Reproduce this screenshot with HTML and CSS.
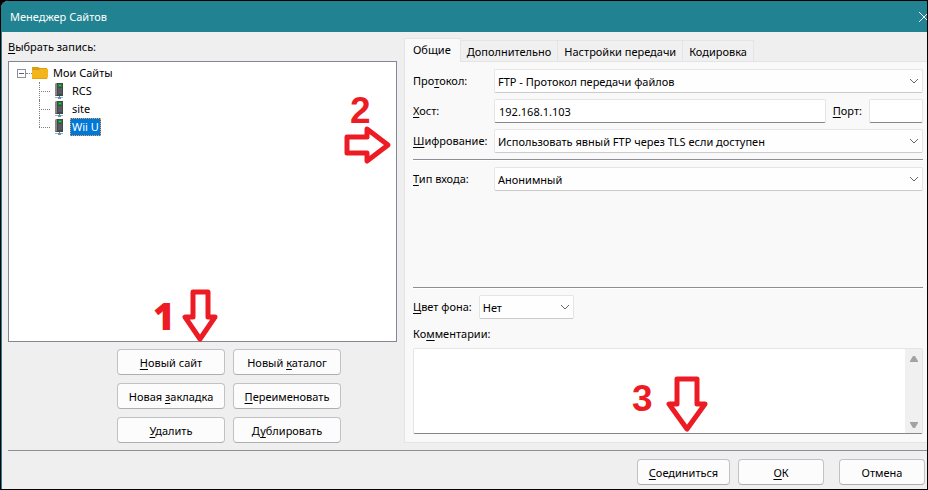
FILE: index.html
```html
<!DOCTYPE html>
<html lang="ru">
<head>
<meta charset="utf-8">
<title>Менеджер Сайтов</title>
<link rel="stylesheet" href="styles.css">
</head>
<body>
<svg class="defs" aria-hidden="true">
  <symbol id="chevron" viewBox="0 0 10 6"><path d="M1 1l4 4 4-4" fill="none" stroke="#666" stroke-width="1"/></symbol>
  <symbol id="server" viewBox="0 0 10 16">
    <path d="M1 1l2-1h6v13H1z" fill="#45484b"/><path d="M1 1l2-1v12l-2 1z" fill="#85898c"/>
    <path d="M4 1h4v3H4z" fill="#168b2c"/><path d="M5 2h2v1H5z" fill="#35c64b"/>
    <path d="M4 6h4M4 8h4M4 10h4" stroke="#696c70" stroke-width="1"/>
    <path d="M5 13h1v2H5z" fill="#777"/><path d="M1 14h8v1H1z" fill="#8fb4d2"/><path d="M4 14h3v2H4z" fill="#6590b5"/>
  </symbol>
</svg>
<div class="window">
  <header class="titlebar">
    <h1>Менеджер Сайтов</h1>
    <button class="close" type="button" aria-label="Закрыть"><svg viewBox="0 0 10 10"><path d="M0 0l10 10M10 0L0 10" stroke="#fff" stroke-width="1"/></svg></button>
  </header>
  <main class="content">
    <section class="sites">
      <h2 class="sites-label"><u>В</u>ыбрать запись:</h2>
      <div class="tree-box">
        <div class="tree-root">
          <button class="expander" type="button" aria-label="Свернуть"></button>
          <span class="stub"></span>
          <svg class="folder" viewBox="0 0 16 14"><path d="M0 1h6l2 1h7v3H0z" fill="#dc9d12"/><path d="M0 4h7l2-1h7v8l-1 2H0z" fill="#f2b51c"/><path d="M0 12h15v1H0z" fill="#e3a214"/></svg>
          <span>Мои Сайты</span>
        </div>
        <ul class="tree">
          <li><svg class="server"><use href="#server"/></svg><span class="name">RCS</span></li>
          <li><svg class="server"><use href="#server"/></svg><span class="name">site</span></li>
          <li><svg class="server"><use href="#server"/></svg><span class="name selected">Wii U</span></li>
        </ul>
      </div>
      <div class="actions">
        <button class="btn" type="button"><span><u>Н</u>овый сайт</span></button>
        <button class="btn" type="button"><span>Новый <u>к</u>аталог</span></button>
        <button class="btn" type="button"><span>Новая <u>з</u>акладка</span></button>
        <button class="btn" type="button"><span><u>П</u>ереименовать</span></button>
        <button class="btn" type="button"><span><u>У</u>далить</span></button>
        <button class="btn" type="button"><span>Д<u>у</u>блировать</span></button>
      </div>
    </section>
    <section class="settings">
      <div class="tabs" role="tablist">
        <button class="tab active" type="button" role="tab" aria-selected="true">Общие</button>
        <button class="tab" type="button" role="tab">Дополнительно</button>
        <button class="tab" type="button" role="tab">Настройки передачи</button>
        <button class="tab" type="button" role="tab">Кодировка</button>
      </div>
      <form class="panel">
        <div class="fields">
          <label for="protocol">Про<u>т</u>окол:</label>
          <div class="select"><select id="protocol"><option>FTP - Протокол передачи файлов</option></select><svg class="chevron"><use href="#chevron"/></svg></div>
          <label for="host"><u>Х</u>ост:</label>
          <div class="host">
            <input class="field" id="host" type="text" value="192.168.1.103">
            <label for="port"><u>П</u>орт:</label>
            <input class="field port" id="port" type="text">
          </div>
          <label for="crypt"><u>Ш</u>ифрование:</label>
          <div class="select"><select id="crypt"><option>Использовать явный FTP через TLS если доступен</option></select><svg class="chevron"><use href="#chevron"/></svg></div>
        </div>
        <hr>
        <div class="fields login">
          <label for="login"><u>Т</u>ип входа:</label>
          <div class="select"><select id="login"><option>Анонимный</option></select><svg class="chevron"><use href="#chevron"/></svg></div>
        </div>
        <hr>
        <div class="color">
          <label for="color"><u>Ц</u>вет фона:</label>
          <div class="select"><select id="color"><option>Нет</option></select><svg class="chevron"><use href="#chevron"/></svg></div>
        </div>
        <label class="comments-label" for="comments">Ко<u>м</u>ментарии:</label>
        <div class="comments">
          <textarea id="comments"></textarea>
          <div class="scroll">
            <svg viewBox="0 0 8 6"><path d="M0 6V5l3-5h2l3 5v1z" fill="#a3a3a3"/></svg>
            <svg viewBox="0 0 8 6"><path d="M0 0v1l3 5h2l3-5V0z" fill="#a3a3a3"/></svg>
          </div>
        </div>
      </form>
    </section>
  </main>
  <footer class="footer">
    <button class="btn connect" type="button"><span><u>С</u>оединиться</span></button>
    <button class="btn" type="button"><span><u>О</u>К</span></button>
    <button class="btn cancel" type="button">Отмена</button>
  </footer>
  <div class="mark mark-1"><b>1</b><svg width="36" height="53" viewBox="0 0 36 53"><path d="M11 3h15v25h7L18 50 3 28h8z"/></svg></div>
  <div class="mark mark-2"><b>2</b><svg width="48" height="40" viewBox="0 0 48 40"><path d="M3 12h20V4l21 16-21 16v-8H3z"/></svg></div>
  <div class="mark mark-3"><b>3</b><svg width="42" height="56" viewBox="0 0 42 56"><path d="M11 3h20v25h8L21 53 3 28h8z"/></svg></div>
</div>
</body>
</html>
```
FILE: styles.css
```css
* { box-sizing: border-box; }

body {
  margin: 0;
  background: #000;
  color: #000;
  font: 11px/16px "Noto Sans", "Open Sans", sans-serif;
}

button, input, select, textarea { font: inherit; color: inherit; margin: 0; }
u { text-underline-offset: 2px; text-decoration-skip-ink: none; }
.defs { position: absolute; width: 0; height: 0; }

.window {
  position: relative;
  display: flex;
  flex-direction: column;
  min-height: 100vh;
  border: 1px solid #000;
  overflow: hidden;
  background: #efefef;
  box-shadow: inset 1px 0 #218391;
  border-radius: 8px 0 0 0;
}

.titlebar {
  display: flex;
  align-items: center;
  justify-content: space-between;
  height: 31px;
  padding-left: 9px;
  background: #218391;
  color: #fff;
}
.titlebar h1 { margin: 0; font-size: 11px; font-weight: 400; }
.close { width: 10px; height: 10px; padding: 0; border: 0; background: none; margin-right: -2px; }
.close svg { display: block; width: 10px; height: 10px; }

.content {
  flex: 1;
  display: grid;
  grid-template-columns: 389fr 523fr;
  gap: 7px;
  padding: 6px 0 7px 7px;
}

.sites { display: flex; flex-direction: column; }
.sites-label { margin: 1px 0 6px; font-size: 11px; font-weight: 400; }
.tree-box {
  flex: 1;
  padding: 2px 8px;
  border: 1px solid #828794;
  background: #fff;
}
.tree-root { display: flex; align-items: center; height: 18px; }
.expander {
  position: relative;
  width: 9px;
  height: 9px;
  padding: 0;
  border: 1px solid #919191;
  background: #fff;
}
.expander::after { content: ""; position: absolute; left: 1px; right: 1px; top: 3px; height: 1px; background: #4b63a7; }
.stub { width: 6px; border-top: 1px dotted #808080; }
.folder { width: 16px; height: 14px; margin-right: 5px; }
.tree { list-style: none; margin: 0; padding: 0 0 0 22px; }
.tree li { position: relative; display: flex; align-items: center; height: 18px; padding-left: 15px; }
.tree li::before { content: ""; position: absolute; left: 0; top: 0; bottom: 0; border-left: 1px dotted #808080; }
.tree li:last-child::before { bottom: 9px; }
.tree li::after { content: ""; position: absolute; left: 0; top: 9px; width: 11px; border-top: 1px dotted #808080; }
.server { width: 10px; height: 16px; margin-right: 6px; }
.name { padding: 0 1px; border: 1px solid transparent; }
.selected { background: #0078d7; color: #fff; border: 1px dotted #ff9b45; }

.actions {
  display: grid;
  grid-template-columns: 108px 108px;
  gap: 8px;
  justify-content: center;
  padding-top: 7px;
  margin-left: 53px;
}
.btn {
  height: 26px;
  padding: 2px 4px 0;
  border: 1px solid #c2c1c6;
  border-bottom-color: #aeadb2;
  border-radius: 4px;
  background: #fcfcfc;
  white-space: nowrap;
}

.settings { display: flex; flex-direction: column; min-width: 0; }
.tabs { display: flex; align-items: flex-end; height: 23px; }
.tab {
  height: 21px;
  padding: 2px 6px 0;
  border: 1px solid #e4e4e4;
  border-left: 0;
  border-bottom: 0;
  background: #f0f0f0;
  white-space: nowrap;
}
.tab.active { height: 24px; margin-bottom: -1px; padding: 0 9px 1px 8px; border-left: 1px solid #e4e4e4; background: #f9f9f9; z-index: 1; }
.panel {
  flex: 1;
  display: flex;
  flex-direction: column;
  padding: 7px 4px 8px 8px;
  border: 1px solid #e4e4e4;
  border-right: 0;
  background: #f9f9f9;
}
.fields { display: grid; grid-template-columns: 73px 1fr; gap: 6px 8px; align-items: center; }
.fields label { white-space: nowrap; }
.select { position: relative; }
.select select {
  appearance: none;
  display: block;
  width: 100%;
  height: 24px;
  padding: 2px 24px 0 3px;
  border: 1px solid #e5e5e5;
  border-bottom-color: #cbcbcb;
  border-radius: 2px;
  background: #fefefe;
}
.chevron { position: absolute; right: 4px; top: 9px; width: 10px; height: 6px; pointer-events: none; }
.host { display: flex; align-items: center; gap: 7px; }
.field {
  flex: 1;
  min-width: 0;
  height: 24px;
  padding: 0 4px;
  border: 1px solid #e5e5e5;
  border-bottom-color: #868686;
  border-radius: 2px;
  background: #fff;
}
.field.port { flex: 0 0 54px; }
.panel hr { width: 100%; height: 2px; margin: 6px 0; border: 0; border-top: 1px solid #8f8d96; border-bottom: 1px solid #fff; }
.login { flex: 1; align-content: start; }
.color { display: flex; align-items: center; gap: 7px; }
.color .select { width: 95px; }
.comments-label { margin: 7px 0 6px; }
.comments { display: flex; height: 86px; border: 1px solid #e5e5e5; border-bottom-color: #868686; border-radius: 2px; background: #fff; }
.comments textarea { flex: 1; min-width: 0; padding: 3px; border: 0; resize: none; background: none; outline: 0; }
.scroll { display: flex; flex-direction: column; justify-content: space-between; align-items: center; width: 17px; padding: 7px 0 5px; background: #f0f0f0; }
.scroll svg { width: 8px; height: 6px; }

.footer {
  display: flex;
  justify-content: flex-end;
  gap: 8px;
  margin-left: 7px;
  padding: 8px 2px 4px 0;
  border-top: 1px solid #8f8d96;
}
.footer .btn { width: 86px; }
.footer .connect { width: 93px; }
.footer .cancel { margin-left: 7px; }

/* Numbered step markers laid over the dialog */
.mark { position: absolute; color: #ed1c24; pointer-events: none; font: 700 37px/38px "Liberation Sans", Arial, sans-serif; }
.mark path { fill: #fff; stroke: #ed1c24; stroke-width: 5; stroke-linejoin: round; }
.mark svg { display: block; }
.mark-1, .mark-3 { display: flex; align-items: center; }
.mark-1 { left: 152px; top: 288px; gap: 7px; }
.mark-1 b { font-family: "Open Sans", sans-serif; }
.mark-2 { left: 343px; top: 91px; }
.mark-2 b { display: block; height: 33px; padding-left: 6px; }
.mark-3 { left: 631px; top: 375px; gap: 13px; align-items: flex-start; }
.mark-3 b { padding-top: 4px; }
```
